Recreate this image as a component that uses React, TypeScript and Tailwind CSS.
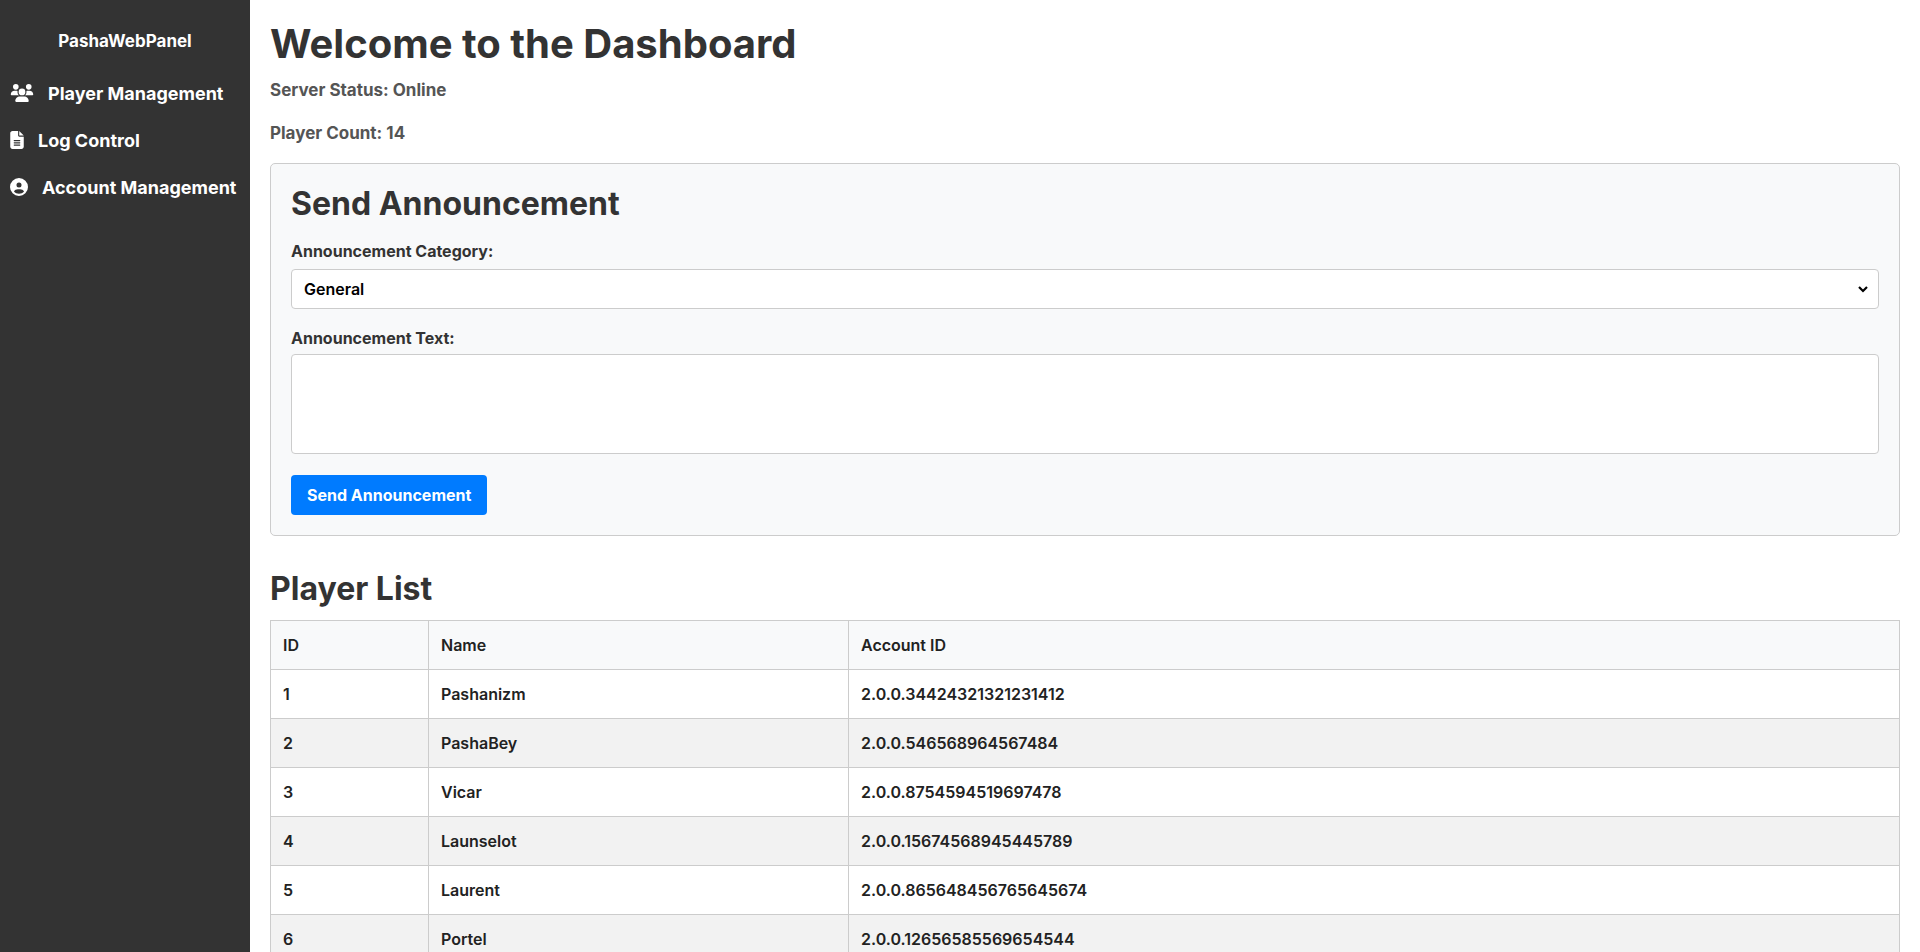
import React from "react";

const players: [number, string, string][] = [
  [1, "Pashanizm", "2.0.0.34424321321231412"],
  [2, "PashaBey", "2.0.0.546568964567484"],
  [3, "Vicar", "2.0.0.8754594519697478"],
  [4, "Launselot", "2.0.0.15674568945445789"],
  [5, "Laurent", "2.0.0.865648456765645674"],
  [6, "Portel", "2.0.0.12656585569654544"],
  [7, "Meridian", "2.0.0.45678912345678912"],
  [8, "Kestrel", "2.0.0.78945612378945612"],
  [9, "Orvyn", "2.0.0.32165498732165498"],
  [10, "Talia", "2.0.0.65498732165498732"],
];

function UsersIcon() {
  return (
    <svg width="24" height="18" viewBox="0 0 640 512" fill="white">
      <path d="M144 0a80 80 0 1 1 0 160A80 80 0 1 1 144 0zM512 0a80 80 0 1 1 0 160A80 80 0 1 1 512 0zM0 298.7C0 239.8 47.8 192 106.7 192h42.7c15.9 0 31 3.5 44.6 9.7c-1.3 7.2-1.900 14.7-1.9 22.3c0 38.2 16.8 72.5 43.3 96H21.3C9.6 320 0 310.4 0 298.7zM405.3 320H404c26.6-23.5 43.3-57.8 43.3-96c0-7.6-.7-15-1.9-22.3c13.6-6.3 28.7-9.7 44.6-9.7h42.7C592.2 192 640 239.8 640 298.7c0 11.8-9.6 21.3-21.3 21.3H405.3zM224 224a96 96 0 1 1 192 0 96 96 0 1 1 -192 0zM128 485.3C128 411.7 187.7 352 261.3 352H378.7C452.3 352 512 411.7 512 485.3c0 14.7-11.9 26.700-26.7 26.7H154.7c-14.7 0-26.7-11.9-26.7-26.7z" />
    </svg>
  );
}
function FileIcon() {
  return (
    <svg width="14" height="18" viewBox="0 0 384 512" fill="white">
      <path d="M64 0C28.7 0 0 28.7 0 64V448c0 35.3 28.7 64 64 64H320c35.3 0 64-28.7 64-64V160H256c-17.7 0-32-14.3-32-32V0H64zM256 0V128H384L256 0zM112 256H272c8.8 0 16 7.2 16 16s-7.2 16-16 16H112c-8.8 0-16-7.2-16-16s7.2-16 16-16zm0 64H272c8.8 0 16 7.2 16 16s-7.2 16-16 16H112c-8.8 0-16-7.2-16-16s7.2-16 16-16zm0 64H272c8.8 0 16 7.2 16 16s-7.2 16-16 16H112c-8.8 0-16-7.2-16-16s7.2-16 16-16z" />
    </svg>
  );
}
function UserCircleIcon() {
  return (
    <svg width="18" height="18" viewBox="0 0 512 512" fill="white">
      <path d="M399 384.2C376.9 345.8 335.4 320 288 320H224c-47.4 0-88.9 25.8-111 64.2c35.2 39.2 86.2 63.8 143 63.8s107.8-24.7 143-63.8zM0 256a256 256 0 1 1 512 0A256 256 0 1 1 0 256zm256 16a72 72 0 1 0 0-144 72 72 0 1 0 0 144z" />
    </svg>
  );
}

export default function App() {
  return (
    <div className="flex h-screen overflow-hidden bg-white text-[#333]" style={{ fontFamily: "Inter, 'Noto Sans', sans-serif" }}>
      <aside className="w-[250px] shrink-0 bg-[#333333] text-white h-screen">
        <div className="text-center text-[17px] font-bold pt-[29px] pb-[27px]">PashaWebPanel</div>
        <nav className="flex flex-col gap-[24px] px-[10px] text-[18px] font-bold">
          <div className="flex items-center gap-[14px] h-[23px]"><UsersIcon />Player Management</div>
          <div className="flex items-center gap-[14px] h-[23px]"><FileIcon />Log Control</div>
          <div className="flex items-center gap-[14px] h-[23px]"><UserCircleIcon />Account Management</div>
        </nav>
      </aside>
      <main className="flex-1 h-screen overflow-y-scroll px-[20px] pt-[18px] pb-10">
        <h1 className="text-[40px] font-bold leading-[52px]">Welcome to the Dashboard</h1>
        <p className="text-[17px] font-bold text-[#555] mt-[8px] leading-[24px]">Server Status: Online</p>
        <p className="text-[17px] font-bold text-[#555] mt-[19px] leading-[24px]">Player Count: 14</p>
        <section className="mt-[18px] bg-[#f8f9fa] border border-[#ccc] rounded-[5px] px-[20px] pt-[21px] pb-[20px]">
          <h2 className="text-[32px] font-bold leading-[38px]">Send Announcement</h2>
          <label className="block text-[16px] font-bold mt-[18px] leading-[20px]">Announcement Category:</label>
          <div className="relative mt-[8px]">
            <select className="w-full h-[40px] bg-white border border-[#ccc] rounded-[4px] px-[12px] text-[16px] font-semibold text-black appearance-none">
              <option>General</option>
            </select>
            <svg className="absolute right-[10px] top-[15px]" width="12" height="10" viewBox="0 0 12 10"><path d="M2 3l4 4 4-4" stroke="black" strokeWidth="2.2" fill="none" /></svg>
          </div>
          <label className="block text-[16px] font-bold mt-[19px] leading-[20px]">Announcement Text:</label>
          <textarea className="block w-full h-[100px] mt-[6px] bg-white border border-[#ccc] rounded-[4px] resize-none" />
          <button className="mt-[21px] bg-[#007bff] text-white text-[16px] font-bold rounded-[4px] h-[40px] px-[16px]">Send Announcement</button>
        </section>
        <h2 className="text-[32px] font-bold mt-[34px] leading-[38px]">Player List</h2>
        <table className="w-full mt-[12px] border-collapse text-[16px] font-semibold text-[#222]">
          <thead>
            <tr className="bg-[#f8f9fa]">
              <th className="border border-[#ccc] text-left px-[12px] h-[49px] w-[158px] font-semibold">ID</th>
              <th className="border border-[#ccc] text-left px-[12px] h-[49px] w-[420px] font-semibold">Name</th>
              <th className="border border-[#ccc] text-left px-[12px] h-[49px] font-semibold">Account ID</th>
            </tr>
          </thead>
          <tbody>
            {players.map(([id, name, acc]) => (
              <tr key={id} className={id % 2 === 0 ? "bg-[#f2f2f2]" : "bg-white"}>
                <td className="border border-[#ccc] px-[12px] h-[49px]">{id}</td>
                <td className="border border-[#ccc] px-[12px] h-[49px]">{name}</td>
                <td className="border border-[#ccc] px-[12px] h-[49px]">{acc}</td>
              </tr>
            ))}
          </tbody>
        </table>
      </main>
    </div>
  );
}
